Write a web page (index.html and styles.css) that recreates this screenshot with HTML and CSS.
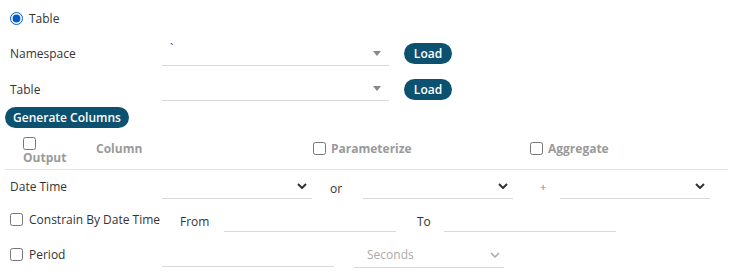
FILE: index.html
```html
<!DOCTYPE html>
<html lang="en">
<head>
    <meta charset="UTF-8">
    <meta name="viewport" content="width=device-width, initial-scale=1.0">
    <title>Table Source</title>
    <link rel="stylesheet" href="styles.css">
</head>
<body>
    <div class="panel">
        <label class="radio-row">
            <input type="radio" name="source" checked>
            <span>Table</span>
        </label>

        <div class="field-row first">
            <div class="label">Namespace</div>
            <div class="select wide">
                <span class="value">`</span>
                <span class="caret"></span>
            </div>
            <button class="pill">Load</button>
        </div>

        <div class="field-row">
            <div class="label">Table</div>
            <div class="select wide">
                <span class="value"></span>
                <span class="caret"></span>
            </div>
            <button class="pill">Load</button>
        </div>

        <div class="gen-row">
            <button class="pill gen">Generate Columns</button>
        </div>

        <div class="header">
            <div class="cell output">
                <input type="checkbox">
                <span>Output</span>
            </div>
            <div class="cell column">Column</div>
            <label class="cell check">
                <input type="checkbox">
                <span>Parameterize</span>
            </label>
            <label class="cell check last">
                <input type="checkbox">
                <span>Aggregate</span>
            </label>
        </div>

        <div class="row date-row">
            <div class="label">Date Time</div>
            <div class="select narrow">
                <span class="value"></span>
                <svg class="chev" width="10" height="6" viewBox="0 0 10 6"><polyline points="1,1 5,5 9,1" fill="none" stroke="#333" stroke-width="2"/></svg>
            </div>
            <div class="joiner or">or</div>
            <div class="select narrow">
                <span class="value"></span>
                <svg class="chev" width="10" height="6" viewBox="0 0 10 6"><polyline points="1,1 5,5 9,1" fill="none" stroke="#333" stroke-width="2"/></svg>
            </div>
            <div class="joiner plus">+</div>
            <div class="select narrow">
                <span class="value"></span>
                <svg class="chev" width="10" height="6" viewBox="0 0 10 6"><polyline points="1,1 5,5 9,1" fill="none" stroke="#333" stroke-width="2"/></svg>
            </div>
        </div>

        <div class="row constrain-row">
            <label class="label check-label constrain">
                <input type="checkbox">
                <span>Constrain By Date Time</span>
            </label>
            <div class="from">From</div>
            <div class="input"></div>
            <div class="to">To</div>
            <div class="input"></div>
        </div>

        <div class="row period-row">
            <label class="label check-label">
                <input type="checkbox">
                <span>Period</span>
            </label>
            <div class="input"></div>
            <div class="select unit">
                <span class="value placeholder">Seconds</span>
                <svg class="chev" width="10" height="6" viewBox="0 0 10 6"><polyline points="1,1 5,5 9,1" fill="none" stroke="#aaa" stroke-width="1.5"/></svg>
            </div>
        </div>
    </div>
</body>
</html>
```

FILE: styles.css
```css
body {
    margin: 0;
    font-family: "Open Sans", "Noto Sans", sans-serif;
    font-size: 12px;
    color: #333;
    background: #fff;
}

.panel {
    width: 734px;
}

input[type="radio"],
input[type="checkbox"] {
    margin: 0;
    width: 13px;
    height: 13px;
}

.radio-row {
    display: flex;
    align-items: center;
    gap: 6px;
    height: 36px;
    padding-left: 10px;
}

.field-row {
    display: flex;
    align-items: center;
    height: 36px;
}

.field-row.first {
    height: 35px;
}

.label {
    width: 152px;
    padding-left: 10px;
    flex-shrink: 0;
}

.select {
    display: flex;
    align-items: center;
    justify-content: space-between;
    height: 24px;
    box-sizing: border-box;
    border-bottom: 1px solid #d8d8d8;
    flex-shrink: 0;
}

.select.wide {
    width: 227px;
    padding: 0 8px 0 8px;
}

.select .value {
    align-self: flex-start;
    line-height: 14px;
}

.caret {
    width: 0;
    height: 0;
    border-left: 4px solid transparent;
    border-right: 4px solid transparent;
    border-top: 5px solid #888;
}

.pill {
    background: #0d5170;
    color: #fff;
    border: none;
    border-radius: 11px;
    font-family: inherit;
    font-size: 12px;
    font-weight: 600;
    height: 21px;
    padding: 0;
    cursor: pointer;
}

.field-row .pill {
    width: 48px;
    margin-left: 15px;
}

.gen-row {
    display: flex;
    height: 21px;
    padding-left: 5px;
}

.pill.gen {
    width: 124px;
}

.header {
    display: flex;
    align-items: center;
    height: 41px;
    margin: 0 6px 0 5px;
    border-bottom: 1px solid #e3e3e3;
    color: #9a9a9a;
    font-weight: 700;
}

.cell {
    flex-shrink: 0;
}

.cell.output {
    display: flex;
    flex-direction: column;
    align-items: flex-start;
    width: 73px;
    padding-left: 18px;
    padding-top: 5px;
    line-height: 15px;
}

.cell.column {
    width: 217px;
}

.cell.check {
    display: flex;
    align-items: center;
    gap: 5px;
    width: 217px;
}

.cell.check.last {
    width: auto;
    flex: 1;
}

.row {
    display: flex;
    align-items: center;
}

.date-row {
    height: 33px;
}

.select.narrow {
    width: 150px;
    padding-right: 5px;
}

.joiner {
    flex-shrink: 0;
}

.or {
    width: 33px;
    padding-left: 18px;
    padding-top: 4px;
}

.plus {
    width: 20px;
    padding-left: 27px;
    color: #888;
    font-size: 11px;
}

.constrain-row {
    height: 34px;
}

.period-row {
    height: 36px;
}

.check-label {
    display: flex;
    align-items: center;
    gap: 6px;
    margin-top: -2px;
}

.label.constrain {
    width: 170px;
}

.from {
    width: 44px;
    padding-top: 3px;
}

.to {
    width: 27px;
    margin-left: 21px;
    padding-top: 3px;
}

.input {
    width: 172px;
    height: 24px;
    border-bottom: 1px solid #d8d8d8;
    box-sizing: border-box;
    flex-shrink: 0;
}

.select.unit {
    width: 150px;
    margin-left: 20px;
    padding: 0 4px 0 13px;
    height: 25px;
}

.placeholder {
    color: #aaa;
    align-self: center !important;
}
```
